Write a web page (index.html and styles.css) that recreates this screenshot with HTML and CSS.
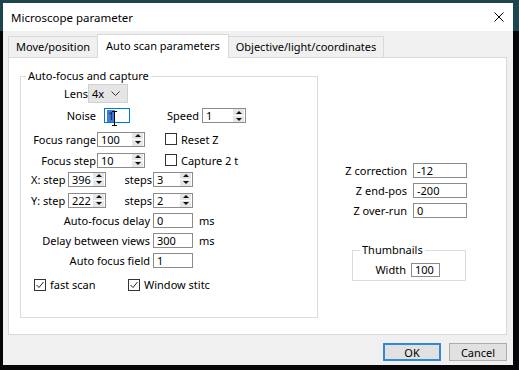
FILE: index.html
```html
<!DOCTYPE html>
<html lang="en">
<head>
    <meta charset="UTF-8">
    <meta name="viewport" content="width=device-width, initial-scale=1.0">
    <title>Microscope parameter</title>
    <link rel="stylesheet" href="styles.css">
</head>
<body>
    <div class="window">
        <div class="titlebar">
            <span class="title">Microscope parameter</span>
            <svg class="close" width="10" height="10" viewBox="0 0 10 10">
                <path d="M0.5 0.5 L9.5 9.5 M9.5 0.5 L0.5 9.5" stroke="#000" stroke-width="1"/>
            </svg>
        </div>

        <div class="client">
            <div class="tabs">
                <div class="tab">Move/position</div>
                <div class="tab active">Auto scan parameters</div>
                <div class="tab">Objective/light/coordinates</div>
            </div>

            <div class="panel">
                <!-- Left group -->
                <fieldset class="group capture">
                    <legend>Auto-focus and capture</legend>
                    <div class="rows">
                        <div class="row">
                            <span class="lbl w-lens">Lens</span>
                            <span class="combo">4x
                                <svg class="chevron" width="9" height="5" viewBox="0 0 9 5"><path d="M0.5 0.5 L4.5 4.5 L8.5 0.5" fill="none" stroke="#333"/></svg>
                            </span>
                        </div>
                        <div class="row">
                            <span class="lbl w-main">Noise</span>
                            <span class="edit noise focused"><span class="sel">1</span>
                                <svg class="ibeam" width="5" height="15" viewBox="0 0 5 15"><path d="M0 0.5 H5 M2.5 0.5 V14.5 M0 14.5 H5" stroke="#000" fill="none"/></svg>
                            </span>
                            <span class="lbl speed">Speed</span>
                            <span class="spin w-speed">
                                <span class="val">1</span>
                                <span class="arrows"><i class="up"></i><i class="down"></i></span>
                            </span>
                        </div>
                        <div class="row">
                            <span class="lbl w-main">Focus range</span>
                            <span class="spin w-focus">
                                <span class="val">100</span>
                                <span class="arrows"><i class="up"></i><i class="down"></i></span>
                            </span>
                            <span class="check near">
                                <span class="box"></span>
                                <span class="text">Reset Z</span>
                            </span>
                        </div>
                        <div class="row">
                            <span class="lbl w-main">Focus step</span>
                            <span class="spin w-focus">
                                <span class="val">10</span>
                                <span class="arrows"><i class="up"></i><i class="down"></i></span>
                            </span>
                            <span class="check near">
                                <span class="box"></span>
                                <span class="text">Capture 2 t</span>
                            </span>
                        </div>
                        <div class="row step">
                            <span class="lbl w-step">X: step</span>
                            <span class="spin w-xy">
                                <span class="val">396</span>
                                <span class="arrows"><i class="up"></i><i class="down"></i></span>
                            </span>
                            <span class="lbl steps"><span>steps</span></span>
                            <span class="spin w-steps">
                                <span class="val">3</span>
                                <span class="arrows"><i class="up"></i><i class="down"></i></span>
                            </span>
                        </div>
                        <div class="row step">
                            <span class="lbl w-step">Y: step</span>
                            <span class="spin w-xy">
                                <span class="val">222</span>
                                <span class="arrows"><i class="up"></i><i class="down"></i></span>
                            </span>
                            <span class="lbl steps"><span>steps</span></span>
                            <span class="spin w-steps">
                                <span class="val">2</span>
                                <span class="arrows"><i class="up"></i><i class="down"></i></span>
                            </span>
                        </div>
                        <div class="row">
                            <span class="lbl w-long">Auto-focus delay</span>
                            <span class="edit w-delay">0</span>
                            <span class="unit">ms</span>
                        </div>
                        <div class="row">
                            <span class="lbl w-long">Delay between views</span>
                            <span class="edit w-delay">300</span>
                            <span class="unit">ms</span>
                        </div>
                        <div class="row">
                            <span class="lbl w-long">Auto focus field</span>
                            <span class="edit w-delay">1</span>
                        </div>
                        <div class="row checks">
                            <span class="check fast">
                                <span class="box checked">
                                    <svg width="10" height="10" viewBox="0 0 10 10"><path d="M1.5 5 L4 7.5 L8.5 2" fill="none" stroke="#222"/></svg>
                                </span>
                                <span class="text">fast scan</span>
                            </span>
                            <span class="check">
                                <span class="box checked">
                                    <svg width="10" height="10" viewBox="0 0 10 10"><path d="M1.5 5 L4 7.5 L8.5 2" fill="none" stroke="#222"/></svg>
                                </span>
                                <span class="text">Window stitc</span>
                            </span>
                        </div>
                    </div>
                </fieldset>

                <!-- Right column -->
                <div class="side">
                    <div class="zrows">
                        <div class="row">
                            <span class="lbl w-z">Z correction</span>
                            <span class="edit w-zval">-12</span>
                        </div>
                        <div class="row">
                            <span class="lbl w-z">Z end-pos</span>
                            <span class="edit w-zval">-200</span>
                        </div>
                        <div class="row">
                            <span class="lbl w-z">Z over-run</span>
                            <span class="edit w-zval">0</span>
                        </div>
                    </div>

                    <fieldset class="group thumbs">
                        <legend>Thumbnails</legend>
                        <div class="row">
                            <span class="lbl w-width">Width</span>
                            <span class="edit w-thumb">100</span>
                        </div>
                    </fieldset>
                </div>
            </div>

            <div class="buttons">
                <button class="btn default">OK</button>
                <button class="btn">Cancel</button>
            </div>
        </div>
    </div>
</body>
</html>
```

FILE: styles.css
```css
/* Win10-style dialog */
:root {
    --face: #f0f0f0;
    --tab-border: #d9d9d9;
    --group-border: #dcdcdc;
    --edit-border: #8c8c8c;
    --accent: #0078d7;
}

* {
    box-sizing: border-box;
}

body {
    margin: 0;
    width: 519px;
    height: 370px;
    padding: 3px 6px 5px 3px;
    background: linear-gradient(#1b4650 0 31px, #050607 31px);
    font-family: "Noto Sans", sans-serif;
    font-size: 11px;
    color: #000;
    overflow: hidden;
}

.window {
    width: 510px;
    height: 362px;
    background: var(--face);
    display: flex;
    flex-direction: column;
}

.titlebar {
    height: 28px;
    flex: none;
    background: white;
    display: flex;
    align-items: center;
    justify-content: space-between;
    padding: 0 9px 0 8px;
    font-size: 11.5px;
}

.client {
    flex: 1;
    padding: 3px 6px 0 5px;
}

/* Tabs */
.tabs {
    display: flex;
    align-items: flex-end;
    height: 23px;
}

.tab {
    height: 21px;
    line-height: 19px;
    padding: 0 7px;
    border: 1px solid var(--tab-border);
    border-bottom: none;
    background: var(--face);
    white-space: nowrap;
}

.tab + .tab {
    margin-left: -1px;
}

.tab.active {
    height: 24px;
    margin-bottom: -1px;
    background: white;
    position: relative;
    z-index: 1;
    line-height: 22px;
    padding: 0 8px;
}

.panel {
    width: 499px;
    height: 278px;
    background: white;
    border: 1px solid var(--tab-border);
    padding: 10px 0 0 11px;
    display: flex;
    align-items: flex-start;
}

/* Group boxes */
.group {
    margin: 0;
    padding: 0;
    border: 1px solid var(--group-border);
    min-width: 0;
}

.group legend {
    padding: 0 2px;
    margin-left: 5px;
    line-height: 16px;
}

.capture {
    width: 298px;
    height: 250px;
}

.rows {
    display: grid;
    grid-template-rows: 19px 25px 22px 20px 18px 24px 17px 23px 17px 18px;
}

.row {
    display: flex;
    align-items: center;
    white-space: nowrap;
}

.row.step {
    padding-left: 10px;
}

.row.checks {
    margin-top: 13px;
    padding-left: 13px;
}

.lbl {
    flex: none;
    text-align: right;
}

.w-lens { width: 67px; }
.w-main { width: 75px; }
.w-long { width: 129px; margin-right: 3px; }
.w-step { width: 36px; text-align: left; margin-right: 1px; }

.speed {
    width: 33px;
    margin-left: 37px;
    margin-right: 2px;
    text-align: left;
}

.steps {
    width: 27px;
    margin-left: 19px;
    margin-right: 1px;
    display: flex;
    justify-content: flex-end;
    overflow: hidden;
}

.unit {
    margin-left: 6px;
}

/* Controls */
.combo {
    width: 40px;
    height: 19px;
    background: #e5e5e5;
    border: 1px solid #d0d0d0;
    display: flex;
    align-items: center;
    justify-content: space-between;
    padding: 0 7px 0 3px;
}

.edit,
.spin {
    height: 15px;
    border: 1px solid var(--edit-border);
    background: white;
    display: flex;
    align-items: center;
    padding-left: 3px;
    line-height: 13px;
    flex: none;
}

.edit.focused {
    border-color: var(--accent);
}

.noise {
    width: 26px;
    margin-left: 8px;
    position: relative;
    padding-left: 2px;
}

.sel {
    background: #3e7fd6;
    color: #0b1d4a;
    padding: 0 1px;
    height: 12px;
    line-height: 12px;
}

.ibeam {
    position: absolute;
    left: 7px;
    top: 2px;
}

.spin {
    padding-right: 0;
}

.val {
    flex: 1;
    overflow: hidden;
}

.arrows {
    width: 11px;
    height: 13px;
    display: flex;
    flex-direction: column;
    gap: 1px;
    margin-right: 1px;
}

.arrows i {
    flex: 1;
    background: #e6e6e6;
    display: flex;
    align-items: center;
    justify-content: center;
}

.arrows i::before {
    content: "";
    border-left: 3px solid transparent;
    border-right: 3px solid transparent;
}

.arrows .up::before {
    border-bottom: 3px solid #111;
}

.arrows .down::before {
    border-top: 3px solid #111;
}

.w-speed { width: 44px; }
.w-focus { width: 48px; margin-left: 1px; }
.w-xy { width: 38px; }
.w-steps { width: 40px; }
.w-delay { width: 40px; }

.check {
    display: flex;
    align-items: center;
    gap: 4px;
}

.check.near {
    margin-left: 20px;
}

.check.fast {
    width: 94px;
}

.box {
    width: 12px;
    height: 12px;
    border: 1px solid #333;
    background: white;
    display: flex;
    align-items: center;
    justify-content: center;
}

/* Right column */
.side {
    margin-left: 12px;
}

.zrows {
    margin-top: 95px;
    display: flex;
    flex-direction: column;
    gap: 5px;
}

.w-z {
    width: 77px;
    margin-right: 6px;
}

.w-zval {
    width: 54px;
}

.thumbs {
    width: 114px;
    margin-left: 22px;
    margin-top: 24px;
    padding-bottom: 3px;
}

.thumbs legend {
    margin-left: 7px;
}

.thumbs .row {
    margin-top: 4px;
}

.w-width {
    width: 53px;
    margin-right: 5px;
}

.w-thumb {
    width: 29px;
    height: 14px;
}

/* Buttons */
.buttons {
    display: flex;
    justify-content: flex-end;
    gap: 8px;
    padding-top: 8px;
}

.btn {
    width: 58px;
    height: 18px;
    padding: 0;
    background: #e1e1e1;
    border: 1px solid #adadad;
    font-family: inherit;
    font-size: 11px;
    color: #000;
}

.btn.default {
    border: 2px solid #2f8bd8;
}
```
